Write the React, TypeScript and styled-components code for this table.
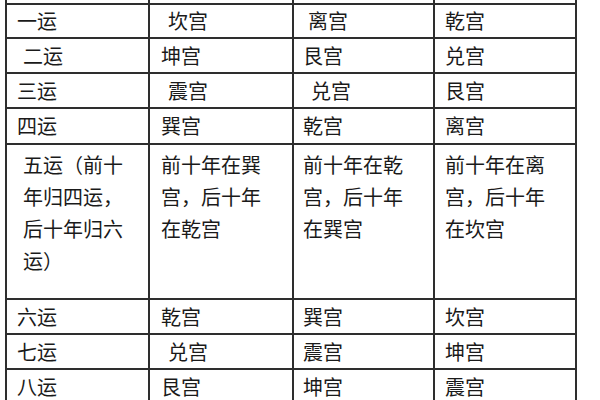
import React from "react";
import styled, { createGlobalStyle } from "styled-components";

const Global = createGlobalStyle`
  html, body { margin: 0; padding: 0; background: #ffffff; }
  body { font-family: "Noto Sans CJK SC", "Noto Sans", sans-serif; }
`;

const Page = styled.div`
  width: 600px;
  height: 400px;
  overflow: hidden;
  padding-left: 5px;
  box-sizing: border-box;
  background: #fff;
`;

const Table = styled.table`
  border-collapse: collapse;
  table-layout: fixed;
  width: 572px;
`;

const Row = styled.tr<{ $h: number }>`
  height: ${(p) => p.$h}px;
`;

const Cell = styled.td<{ $pad: number; $top?: boolean; $edge?: boolean }>`
  border: 2px solid #2e2e2e;
  ${(p) => (p.$edge ? "border-top: none;" : "")}
  padding: ${(p) => (p.$top ? "4px" : "0")} 0 0 ${(p) => p.$pad}px;
  vertical-align: ${(p) => (p.$top ? "top" : "middle")};
  font-family: "Noto Sans CJK SC", "Noto Sans", sans-serif;
  font-size: 20px;
  line-height: 32px;
  color: #1a1a1a;
  white-space: nowrap;
  overflow: hidden;
`;

const Line = styled.div`
  display: block;
`;

type C = { t: string | string[]; i?: number };

const pads = [10, 11, 9, 10];

const rows: { h: number; cells: C[] }[] = [
  { h: 34, cells: [{ t: "一运" }, { t: "坎宫", i: 7 }, { t: "离宫", i: 5 }, { t: "乾宫" }] },
  { h: 35, cells: [{ t: "二运", i: 6 }, { t: "坤宫" }, { t: "艮宫" }, { t: "兑宫" }] },
  { h: 35, cells: [{ t: "三运" }, { t: "震宫", i: 7 }, { t: "兑宫", i: 8 }, { t: "艮宫" }] },
  { h: 36, cells: [{ t: "四运" }, { t: "巽宫" }, { t: "乾宫" }, { t: "离宫" }] },
  {
    h: 155,
    cells: [
      { t: ["五运（前十", "年归四运，", "后十年归六", "运）"], i: 6 },
      { t: ["前十年在巽", "宫，后十年", "在乾宫"] },
      { t: ["前十年在乾", "宫，后十年", "在巽宫"] },
      { t: ["前十年在离", "宫，后十年", "在坎宫"] },
    ],
  },
  { h: 35, cells: [{ t: "六运" }, { t: "乾宫" }, { t: "巽宫" }, { t: "坎宫" }] },
  { h: 35, cells: [{ t: "七运" }, { t: "兑宫", i: 7 }, { t: "震宫" }, { t: "坤宫" }] },
  { h: 35, cells: [{ t: "八运" }, { t: "艮宫" }, { t: "坤宫" }, { t: "震宫" }] },
];

const widths = [143, 144, 141, 142];

export default function App() {
  return (
    <Page>
      <Global />
      <Table>
        <colgroup>
          {widths.map((w, i) => (
            <col key={i} style={{ width: w }} />
          ))}
        </colgroup>
        <tbody>
          <Row $h={4}>
            {widths.map((_, i) => (
              <Cell key={i} $pad={0} $edge />
            ))}
          </Row>
          {rows.map((r, ri) => (
            <Row key={ri} $h={r.h}>
              {r.cells.map((c, ci) => (
                <Cell key={ci} $pad={pads[ci] + (c.i ?? 0)} $top={Array.isArray(c.t)}>
                  {Array.isArray(c.t) ? c.t.map((l, li) => <Line key={li}>{l}</Line>) : c.t}
                </Cell>
              ))}
            </Row>
          ))}
        </tbody>
      </Table>
    </Page>
  );
}
